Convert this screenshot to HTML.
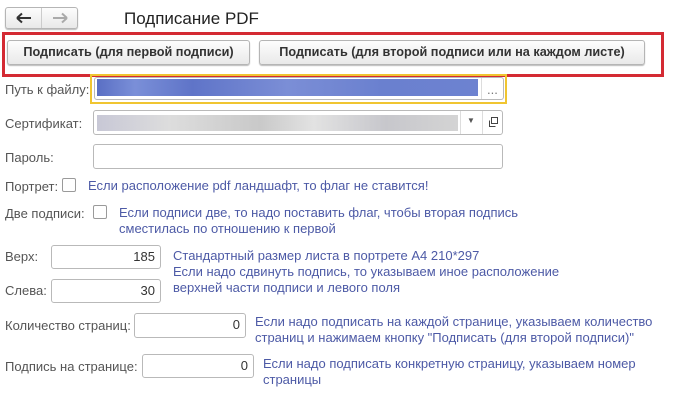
<!DOCTYPE html>
<html><head><meta charset="utf-8"><style>
*{box-sizing:border-box;margin:0;padding:0}
body{width:687px;height:400px;background:#fff;font-family:"Liberation Sans",Arial,sans-serif;font-size:13px;color:#444;position:relative;overflow:hidden}
.a{position:absolute;white-space:nowrap}
.lbl{color:#555}
.hint{color:#4d5aa6;line-height:15.5px}
.inp{position:absolute;border:1px solid #b9b9b9;border-radius:3px;background:#fff}
.num{text-align:right;padding-right:5px;line-height:22px;color:#333;font-size:13px}
.btn{position:absolute;border:1px solid #b5b5b5;border-radius:3px;background:linear-gradient(#fdfdfd,#e9e9e9);box-shadow:0 1px 1px #bbb;color:#333;font-weight:bold;font-size:12.7px;text-align:center;line-height:23px}
.cb{position:absolute;width:14px;height:14px;border:1px solid #9a9a9a;border-radius:2px;background:#fff}
</style></head><body>
<div class="btn" style="left:5px;top:7px;width:73px;height:22px"></div>
<div class="a" style="left:41px;top:8px;width:1px;height:20px;background:#ccc"></div>
<svg class="a" style="left:16px;top:12px" width="16" height="12" viewBox="0 0 16 12"><path d="M1 6h14M1 6l5-4.5M1 6l5 4.5" fill="none" stroke="#333" stroke-width="2"/></svg>
<svg class="a" style="left:52px;top:12px" width="16" height="12" viewBox="0 0 16 12"><path d="M1 6h13M15 6l-5-4.5M15 6l-5 4.5" fill="none" stroke="#aaa" stroke-width="2"/></svg>
<div class="a" style="left:124px;top:9px;font-size:17px;color:#222">Подписание PDF</div>

<div class="a" style="left:2px;top:32px;width:662px;height:45px;border:3px solid #d42a33"></div>
<div class="btn" style="left:7px;top:40px;width:243px;height:25px">Подписать (для первой подписи)</div>
<div class="btn" style="left:259px;top:40px;width:386px;height:25px">Подписать (для второй подписи или на каждом листе)</div>

<div class="a lbl" style="left:5px;top:82px">Путь к файлу:</div>
<div class="a" style="left:90px;top:74px;width:417px;height:30px;border:2px solid #f0c531"></div>
<div class="inp" style="left:94px;top:77px;width:410px;height:23px"></div>
<div class="a" style="left:97px;top:79px;width:381px;height:17px;background:linear-gradient(90deg,#5a6fc4,#7a8fd8 10%,#5f74c8 25%,#7b8ed6 50%,#6a80cf 75%,#6d82d0)"></div>
<div class="a" style="left:481px;top:78px;width:1px;height:21px;background:#ddd"></div>
<div class="a" style="left:487px;top:82px;color:#777">...</div>

<div class="a lbl" style="left:5px;top:116px">Сертификат:</div>
<div class="inp" style="left:93px;top:110px;width:410px;height:25px"></div>
<div class="a" style="left:97px;top:115px;width:361px;height:16px;background:linear-gradient(90deg,#c8c8d6,#ddd 20%,#c9c9c9 45%,#e2e2e2 60%,#c7c7cc 80%,#d4d4d4)"></div>
<div class="a" style="left:460px;top:111px;width:1px;height:23px;background:#ddd"></div>
<div class="a" style="left:482px;top:111px;width:1px;height:23px;background:#ddd"></div>
<div class="a" style="left:467px;top:116px;font-size:8px;color:#555">▼</div>
<svg class="a" style="left:487px;top:116px" width="12" height="12" viewBox="0 0 12 12"><rect x="4.5" y="1.5" width="6" height="6" fill="none" stroke="#444"/><path d="M2.5 4.5v6h6" fill="none" stroke="#444"/></svg>

<div class="a lbl" style="left:5px;top:150px">Пароль:</div>
<div class="inp" style="left:93px;top:144px;width:410px;height:25px"></div>

<div class="a lbl" style="left:5px;top:179px">Портрет:</div>
<div class="cb" style="left:62px;top:178px"></div>
<div class="a hint" style="left:88px;top:178px">Если расположение pdf ландшафт, то флаг не ставится!</div>

<div class="a lbl" style="left:5px;top:206px">Две подписи:</div>
<div class="cb" style="left:93px;top:205px"></div>
<div class="a hint" style="left:119px;top:205px">Если подписи две, то надо поставить флаг, чтобы вторая подпись<br>сместилась по отношению к первой</div>

<div class="a lbl" style="left:5px;top:249px">Верх:</div>
<div class="inp num" style="left:51px;top:245px;width:110px;height:24px">185</div>
<div class="a lbl" style="left:5px;top:283px">Слева:</div>
<div class="inp num" style="left:51px;top:279px;width:110px;height:24px">30</div>
<div class="a hint" style="left:173px;top:248px;line-height:16px">Стандартный размер листа в портрете А4 210*297<br>Если надо сдвинуть подпись, то указываем иное расположение<br>верхней части подписи и левого поля</div>

<div class="a lbl" style="left:5px;top:318px">Количество страниц:</div>
<div class="inp num" style="left:134px;top:313px;width:112px;height:25px">0</div>
<div class="a hint" style="left:255px;top:314px;line-height:16px">Если надо подписать на каждой странице, указываем количество<br>страниц и нажимаем кнопку "Подписать (для второй подписи)"</div>

<div class="a lbl" style="left:5px;top:359px">Подпись на странице:</div>
<div class="inp num" style="left:142px;top:354px;width:112px;height:24px">0</div>
<div class="a hint" style="left:263px;top:356px;line-height:16px">Если надо подписать конкретную страницу, указываем номер<br>страницы</div>
</body></html>
